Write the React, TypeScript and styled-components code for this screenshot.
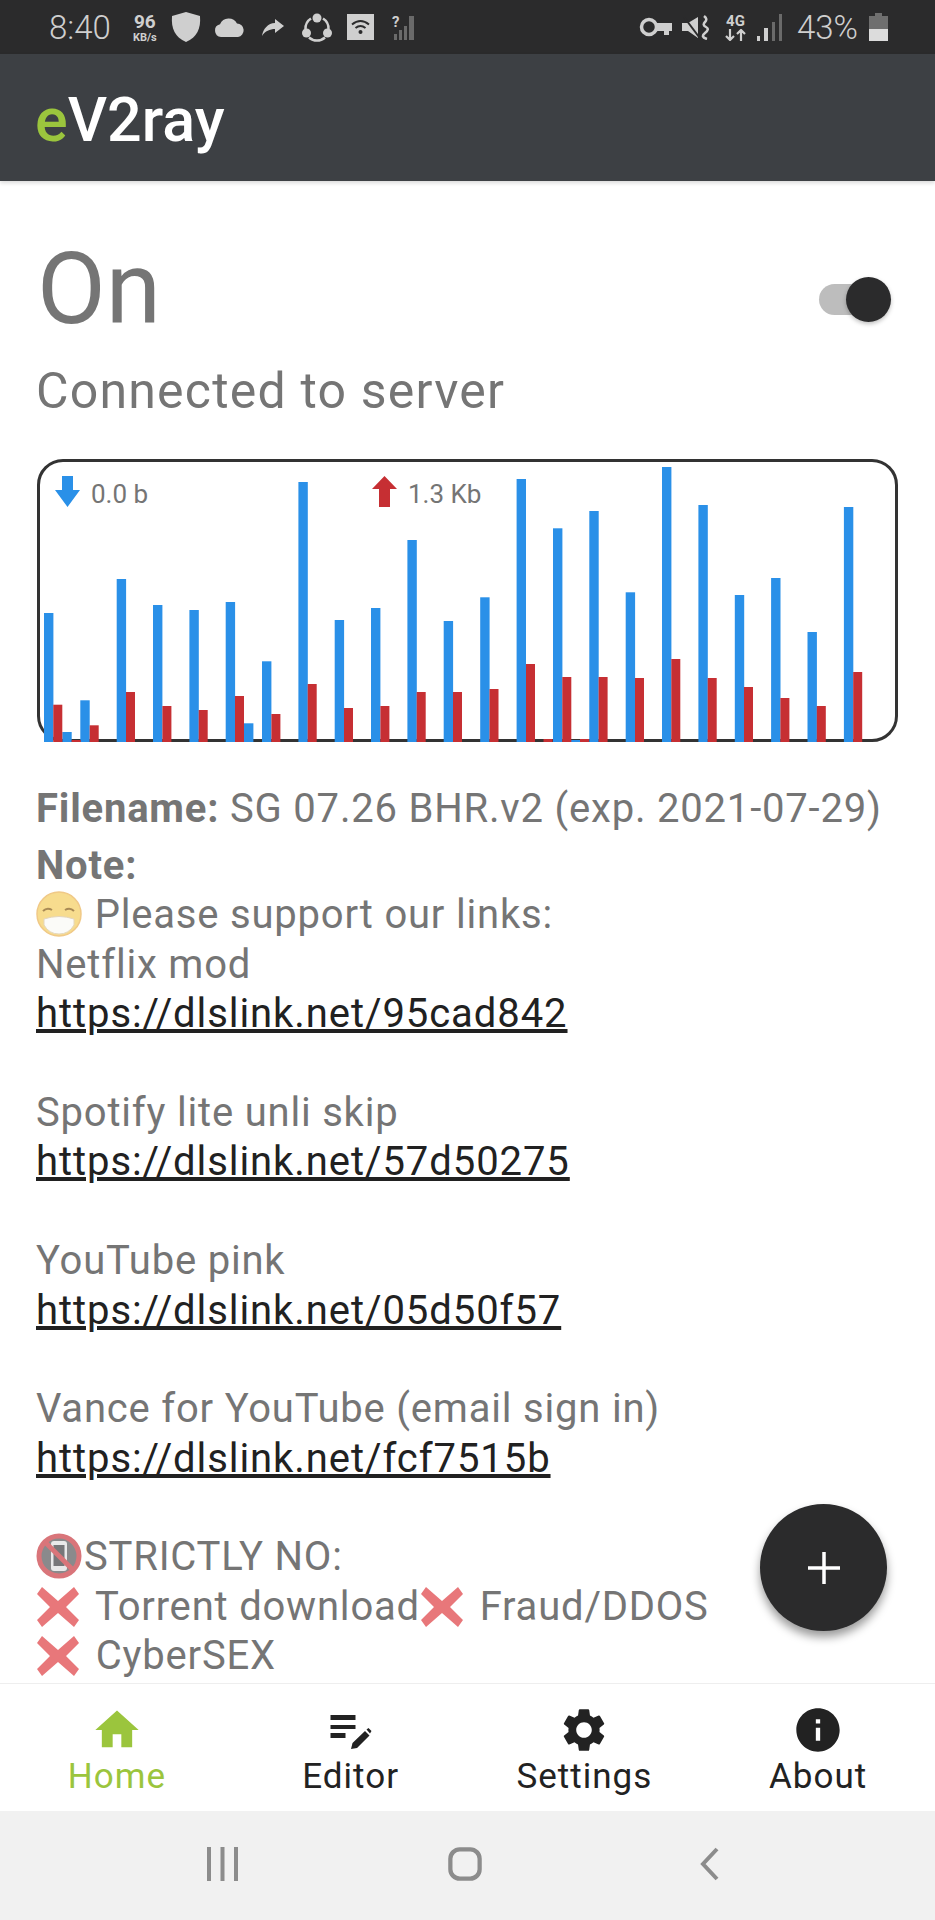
import React from "react";
import styled, { createGlobalStyle } from "styled-components";
import { MdHome, MdInfo, MdSettings } from "react-icons/md";

const blueBars = [
    [44, 129], [80.3, 41.7], [116.7, 163], [153, 137], [189.4, 132], [225.7, 140], [262, 80.7],
    [298.4, 260], [334.7, 122], [371, 134], [407.4, 202], [443.7, 121], [480.2, 144.7],
    [516.6, 263], [553, 213.7], [589.3, 231], [625.7, 149.7], [662, 275], [698.4, 237],
    [734.8, 147], [771.1, 164], [807.5, 110], [843.9, 235],
    [62.3, 10], [244, 18.7], [571, 2],
];

const redBars = [
    [53.3, 37.3], [89.7, 16.7], [126, 50], [162.4, 36], [198.7, 32], [235, 46], [271.4, 28],
    [307.7, 58], [344, 34], [380.4, 36], [416.7, 50], [453, 50], [489.5, 53],
    [526, 78], [562.3, 65], [598.6, 65], [635, 64], [671.3, 83], [707.7, 64],
    [744, 55], [780.4, 44], [816.8, 36], [853.2, 70],
    [71.7, 2], [543.5, 3], [580, 3],
];

const links = [
    { label: "Netflix mod", url: "https://dlslink.net/95cad842" },
    { label: "Spotify lite unli skip", url: "https://dlslink.net/57d50275" },
    { label: "YouTube pink", url: "https://dlslink.net/05d50f57" },
    { label: "Vance for YouTube (email sign in)", url: "https://dlslink.net/fcf7515b" },
];

function MaskEmoji(): React.ReactElement {
    return (
        <EmojiSvg viewBox="0 0 46 46" $size={46} $mr={2}>
            <circle cx="23" cy="23" r="22" fill="#f7dc8e" stroke="#f0c987" strokeWidth="1.5" />
            <path d="M7 20q4-4 9-1M29 19q5-3 9 1" fill="none" stroke="#a98a55" strokeWidth="2" />
            <path d="M8 28q15-5 30 0v6q-5 9-15 9t-15-9z" fill="#fbfbf8" stroke="#e4d6bd" strokeWidth="1" />
        </EmojiSvg>
    );
}

function NoPhoneEmoji(): React.ReactElement {
    return (
        <EmojiSvg viewBox="0 0 46 46" $size={46} $mr={2}>
            <circle cx="23" cy="23" r="20" fill="#8a8a8c" stroke="#d9757a" strokeWidth="5" />
            <rect x="15" y="8" width="16" height="30" rx="3" fill="#e9e9ea" />
            <rect x="17.5" y="12" width="11" height="21" fill="#77777a" />
            <path d="M9 9l28 28" stroke="#d9757a" strokeWidth="5" />
        </EmojiSvg>
    );
}

function CrossEmoji(): React.ReactElement {
    return (
        <EmojiSvg viewBox="0 0 44 44" $size={44} $mr={5}>
            <path d="M6 2l16 14L38 2l5 7-13 13 13 13-5 7-16-14L6 42l-5-7 13-13L1 9z" fill="#e8777a" />
        </EmojiSvg>
    );
}

function App(): React.ReactElement {
    return (
        <Page>
            <GlobalStyle />
            <StatusBar>
                <StatusGroup>
                    <Clock>8:40</Clock>
                    <NetSpeed>
                        <SpeedValue>96</SpeedValue>
                        <SpeedUnit>KB/s</SpeedUnit>
                    </NetSpeed>
                    <StatusIcon viewBox="0 0 32 32" $w={32} $h={32} $ml={10}>
                        <path d="M16 1l14 4c1 13-3 21-14 26C5 26 1 18 2 5z" fill="#cfcfcf" />
                    </StatusIcon>
                    <StatusIcon viewBox="0 0 31 19" $w={31} $h={19} $ml={12}>
                        <path d="M7 19a6.5 6.5 0 0 1-1-12.8A9.5 9.5 0 0 1 23 5.500a6.800 6.800 0 0 1 1 13.500z" fill="#cfcfcf" />
                    </StatusIcon>
                    <StatusIcon viewBox="0 0 22 17" $w={22} $h={17} $ml={17}>
                        <path d="M13 0l9 7-9 7v-4C8 10 3 12 0 17 1 10 6 4 13 4z" fill="#cfcfcf" />
                    </StatusIcon>
                    <StatusIcon viewBox="0 0 30 29" $w={30} $h={29} $ml={18}>
                        <path d="M9 5.500A12 12 0 0 0 3.500 16M21 5.500A12 12 0 0 1 26.500 16M7 24.500a12 12 0 0 0 16 0" fill="none" stroke="#cfcfcf" strokeWidth="2.500" />
                        <circle cx="15" cy="5" r="4.500" fill="#cfcfcf" />
                        <circle cx="4.500" cy="20" r="4.500" fill="#cfcfcf" />
                        <circle cx="25.500" cy="20" r="4.500" fill="#cfcfcf" />
                    </StatusIcon>
                    <StatusIcon viewBox="0 0 27 26" $w={27} $h={26} $ml={15}>
                        <rect width="27" height="26" fill="#cfcfcf" />
                        <path d="M5 10.500q8.500-7 17 0M8.500 14q5-4 10 0" fill="none" stroke="#2b2b2c" strokeWidth="2" />
                        <circle cx="13.500" cy="18" r="2" fill="#2b2b2c" />
                    </StatusIcon>
                    <StatusIcon viewBox="0 0 24 26" $w={24} $h={26} $ml={18}>
                        <text x="0" y="13" fontSize="15" fontWeight="700" fill="#cfcfcf" fontFamily="Roboto, sans-serif">?</text>
                        <path d="M2 26v-6h3v6zM7 26v-10h3v10zM12 26v-14h3v14zM17 26V2h5v24z" fill="#6a6a6a" />
                    </StatusIcon>
                </StatusGroup>
                <StatusGroup>
                    <StatusIcon viewBox="0 0 33 20" $w={33} $h={20}>
                        <circle cx="10" cy="10" r="7.500" fill="none" stroke="#cfcfcf" strokeWidth="3.500" />
                        <path d="M17 6h16v8h-3v4h-5v-4h-8z" fill="#cfcfcf" />
                    </StatusIcon>
                    <StatusIcon viewBox="0 0 28 25" $w={28} $h={25} $ml={10}>
                        <path d="M0 8h6l10-6v21L6 16H0z" fill="#cfcfcf" />
                        <path d="M2 2l15 20" stroke="#2b2b2c" strokeWidth="2" />
                        <path d="M22 1q4 3 1 6t1 5-1 6 2 6" fill="none" stroke="#cfcfcf" strokeWidth="2.500" />
                    </StatusIcon>
                    <NetworkType>
                        <NetworkLabel>4G</NetworkLabel>
                        <StatusIcon viewBox="0 0 21 12" $w={21} $h={12}>
                            <path d="M5 0v11M1 7l4 4 4-4M16 12V1M12 5l4-4 4 4" fill="none" stroke="#cfcfcf" strokeWidth="2.200" />
                        </StatusIcon>
                    </NetworkType>
                    <StatusIcon viewBox="0 0 26 27" $w={26} $h={27} $ml={11}>
                        <path d="M0 27v-5h3v5zM7 27V14h4v13z" fill="#cfcfcf" />
                        <path d="M15 27V8h3v19zM22 27V0h3v27z" fill="#6a6a6a" />
                    </StatusIcon>
                    <BatteryText>43%</BatteryText>
                    <StatusIcon viewBox="0 0 19 28" $w={19} $h={28} $ml={11}>
                        <path d="M6 0h7v3h6v13H0V3h6z" fill="#6f6f6f" />
                        <rect y="16" width="19" height="12" fill="#dcdcdc" />
                    </StatusIcon>
                </StatusGroup>
            </StatusBar>

            <AppBar>
                <AppTitle><TitleAccent>e</TitleAccent>V2ray</AppTitle>
            </AppBar>

            <Main>
                <StateRow>
                    <StateText>On</StateText>
                    <Switch>
                        <SwitchThumb />
                    </Switch>
                </StateRow>
                <Subtitle>Connected to server</Subtitle>

                <ChartBox>
                    <ChartSvg viewBox="37 460 861 283">
                        {blueBars.map(([x, h]) => (
                            <rect key={`b${x}`} x={x} y={743 - h} width={9.4} height={h} fill="#2a90e8" />
                        ))}
                        {redBars.map(([x, h]) => (
                            <rect key={`r${x}`} x={x} y={743 - h} width={9} height={h} fill="#c62f33" />
                        ))}
                    </ChartSvg>
                    <SpeedRow>
                        <SpeedLabel $width={317}>
                            <ArrowIcon viewBox="0 0 25 31">
                                <path d="M7 0h11v14h7L12.500 31 0 14h7z" fill="#2a90e8" />
                            </ArrowIcon>
                            0.0 b
                        </SpeedLabel>
                        <SpeedLabel>
                            <ArrowIcon viewBox="0 0 25 31">
                                <path d="M12.500 0L25 13h-7v18H7V13H0z" fill="#c62f33" />
                            </ArrowIcon>
                            1.3 Kb
                        </SpeedLabel>
                    </SpeedRow>
                </ChartBox>

                <Details>
                    <FileLine><b>Filename:</b> SG 07.26 BHR.v2 (exp. 2021-07-29)</FileLine>
                    <Line><b>Note:</b></Line>
                    <Line><MaskEmoji /> Please support our links:</Line>
                    {links.map((link) => (
                        <LinkBlock key={link.url}>
                            <Line>{link.label}</Line>
                            <LinkLine href="#">{link.url}</LinkLine>
                        </LinkBlock>
                    ))}
                    <Line><NoPhoneEmoji />STRICTLY NO:</Line>
                    <Line><CrossEmoji /> Torrent download<CrossEmoji /> Fraud/DDOS</Line>
                    <Line><CrossEmoji /> CyberSEX</Line>
                </Details>
            </Main>

            <Fab>
                <svg width="34" height="34" viewBox="0 0 34 34">
                    <path d="M17 1v32M1 17h32" stroke="#fff" strokeWidth="3.500" />
                </svg>
            </Fab>

            <TabBar>
                <Tab $active>
                    <MdHome size={52} />
                    <TabLabel>Home</TabLabel>
                </Tab>
                <Tab>
                    <svg width="52" height="52" viewBox="0 0 52 52">
                        <path d="M5.500 11h25v5h-25zM5.500 21h25v4h-25zM5.500 29h15v5h-15z" fill="#222" />
                        <path d="M26 45l1.500-6L40 27l4.500 4.500L32 44zM41.500 25.500l2-1.500 3 3-1.500 2.500z" fill="#222" />
                    </svg>
                    <TabLabel>Editor</TabLabel>
                </Tab>
                <Tab>
                    <MdSettings size={52} />
                    <TabLabel>Settings</TabLabel>
                </Tab>
                <Tab>
                    <MdInfo size={52} />
                    <TabLabel>About</TabLabel>
                </Tab>
            </TabBar>

            <SystemBar>
                <SystemIcon viewBox="0 0 33 34" $w={33} $ml={206}>
                    <path d="M3 0v34M16.500 0v34M30 0v34" stroke="#8c8c8c" strokeWidth="4" />
                </SystemIcon>
                <SystemIcon viewBox="0 0 36 36" $w={36} $ml={208}>
                    <rect x="2.500" y="2.500" width="31" height="31" rx="10" fill="none" stroke="#8c8c8c" strokeWidth="4.500" />
                </SystemIcon>
                <SystemIcon viewBox="0 0 19 34" $w={19} $ml={217}>
                    <path d="M17 2L3 17l14 15" fill="none" stroke="#8c8c8c" strokeWidth="4" />
                </SystemIcon>
            </SystemBar>
        </Page>
    );
}

const GlobalStyle = createGlobalStyle`
    html, body {
        margin: 0;
        padding: 0;
        background: #fff;
    }
`

const Page = styled.div`
    position: relative;
    display: flex;
    flex-direction: column;
    width: 935px;
    height: 1920px;
    overflow: hidden;
    font-family: Roboto, "Liberation Sans", sans-serif;
`

const StatusBar = styled.div`
    display: flex;
    align-items: center;
    justify-content: space-between;
    flex: none;
    height: 54px;
    padding: 0 47px 0 49px;
    box-sizing: border-box;
    background-color: #2b2b2c;
    color: #cfcfcf;
`

const StatusGroup = styled.div`
    display: flex;
    align-items: center;
`

const Clock = styled.span`
    font-size: 33px;
    font-weight: 300;
`

const NetSpeed = styled.div`
    display: flex;
    flex-direction: column;
    align-items: center;
    margin-left: 19px;
    width: 30px;
    font-weight: 700;
`

const SpeedValue = styled.span`
    font-size: 19px;
    line-height: 20px;
`

const SpeedUnit = styled.span`
    font-size: 11px;
    line-height: 11px;
`

const StatusIcon = styled.svg<{ $w: number; $h: number; $ml?: number }>`
    display: block;
    flex: none;
    width: ${(p) => p.$w}px;
    height: ${(p) => p.$h}px;
    margin-left: ${(p) => p.$ml ?? 0}px;
`

const NetworkType = styled.div`
    display: flex;
    flex-direction: column;
    align-items: center;
    margin-left: 15px;
`

const NetworkLabel = styled.span`
    font-size: 15px;
    line-height: 15px;
    font-weight: 700;
`

const BatteryText = styled.span`
    margin-left: 14px;
    font-size: 33px;
    font-weight: 300;
`

const AppBar = styled.header`
    display: flex;
    align-items: center;
    flex: none;
    height: 127px;
    padding: 4px 0 0 35px;
    box-sizing: border-box;
    background-color: #3d4044;
    box-shadow: 0 2px 4px rgba(0, 0, 0, 0.15);
    z-index: 1;
`

const AppTitle = styled.h1`
    margin: 0;
    font-size: 61px;
    font-weight: 500;
    color: #fff;
`

const TitleAccent = styled.span`
    color: #9bc53d;
`

const Main = styled.main`
    flex: 1;
    min-height: 0;
    overflow: hidden;
    padding: 52px 37px 0;
`

const StateRow = styled.div`
    display: flex;
    align-items: center;
    justify-content: space-between;
    height: 112px;
`

const StateText = styled.div`
    font-size: 100px;
    line-height: 112px;
    color: #757575;
`

const Switch = styled.div`
    position: relative;
    width: 51px;
    height: 31px;
    margin: 20px 28px 0 0;
    border-radius: 16px;
    background-color: #bdbdbd;
`

const SwitchThumb = styled.div`
    position: absolute;
    top: -7px;
    left: 27px;
    width: 45px;
    height: 45px;
    border-radius: 50%;
    background-color: #2b2b2c;
    box-shadow: 0 2px 4px rgba(0, 0, 0, 0.25);
`

const Subtitle = styled.div`
    margin: 16px 0 0 -1px;
    font-size: 50px;
    letter-spacing: 1.2px;
    line-height: 60px;
    color: #757575;
`

const ChartBox = styled.div`
    position: relative;
    width: 861px;
    height: 283px;
    margin-top: 38px;
    box-sizing: border-box;
    border: 3px solid #333;
    border-radius: 26px;
`

const ChartSvg = styled.svg`
    position: absolute;
    top: -3px;
    left: -3px;
    width: 861px;
    height: 283px;
    overflow: visible;
`

const SpeedRow = styled.div`
    position: relative;
    display: flex;
    padding: 13px 0 0 15px;
`

const SpeedLabel = styled.div<{ $width?: number }>`
    display: flex;
    align-items: center;
    gap: 11px;
    width: ${(p) => (p.$width ? `${p.$width}px` : "auto")};
    font-size: 26px;
    line-height: 38px;
    color: #757575;
`

const ArrowIcon = styled.svg`
    width: 25px;
    height: 31px;
    margin-top: -6px;
`

const Details = styled.div`
    margin: 38px 0 0 -1px;
    font-size: 40px;
    letter-spacing: 0.8px;
    color: #757575;

    b {
        font-weight: 700;
    }
`

const FileLine = styled.div`
    height: 61px;
    line-height: 58px;
    white-space: nowrap;
`

const Line = styled.div`
    line-height: 49.4px;
    height: 49.4px;
    white-space: nowrap;
`

const LinkBlock = styled.div`
    margin-bottom: 49.4px;
`

const LinkLine = styled.a`
    display: block;
    height: 49.4px;
    line-height: 49.4px;
    letter-spacing: 0.93px;
    color: #212121;
    text-decoration: underline;
`

const EmojiSvg = styled.svg<{ $size: number; $mr: number }>`
    display: inline-block;
    width: ${(p) => p.$size}px;
    height: ${(p) => p.$size}px;
    margin-right: ${(p) => p.$mr}px;
    vertical-align: -9px;
`

const Fab = styled.div`
    position: absolute;
    left: 760px;
    top: 1504px;
    display: flex;
    align-items: center;
    justify-content: center;
    width: 127px;
    height: 127px;
    border-radius: 50%;
    background-color: #2b2b2c;
    box-shadow: 0 6px 10px rgba(0, 0, 0, 0.4);
`

const TabBar = styled.nav`
    display: grid;
    grid-template-columns: repeat(4, 1fr);
    flex: none;
    height: 128px;
    box-sizing: border-box;
    border-top: 1px solid #eee;
    background-color: #fff;
`

const Tab = styled.div<{ $active?: boolean }>`
    display: flex;
    flex-direction: column;
    align-items: center;
    padding-top: 20px;
    color: ${(p) => (p.$active ? "#9bc53d" : "#222")};
`

const TabLabel = styled.span`
    margin-top: 1px;
    font-size: 35px;
    letter-spacing: 1px;
    line-height: 40px;
`

const SystemBar = styled.div`
    display: flex;
    align-items: center;
    flex: none;
    height: 109px;
    padding-bottom: 3px;
    box-sizing: border-box;
    background-color: #f1f1f1;
`

const SystemIcon = styled.svg<{ $w: number; $ml: number }>`
    flex: none;
    width: ${(p) => p.$w}px;
    height: 34px;
    margin-left: ${(p) => p.$ml}px;
`

export default App;
